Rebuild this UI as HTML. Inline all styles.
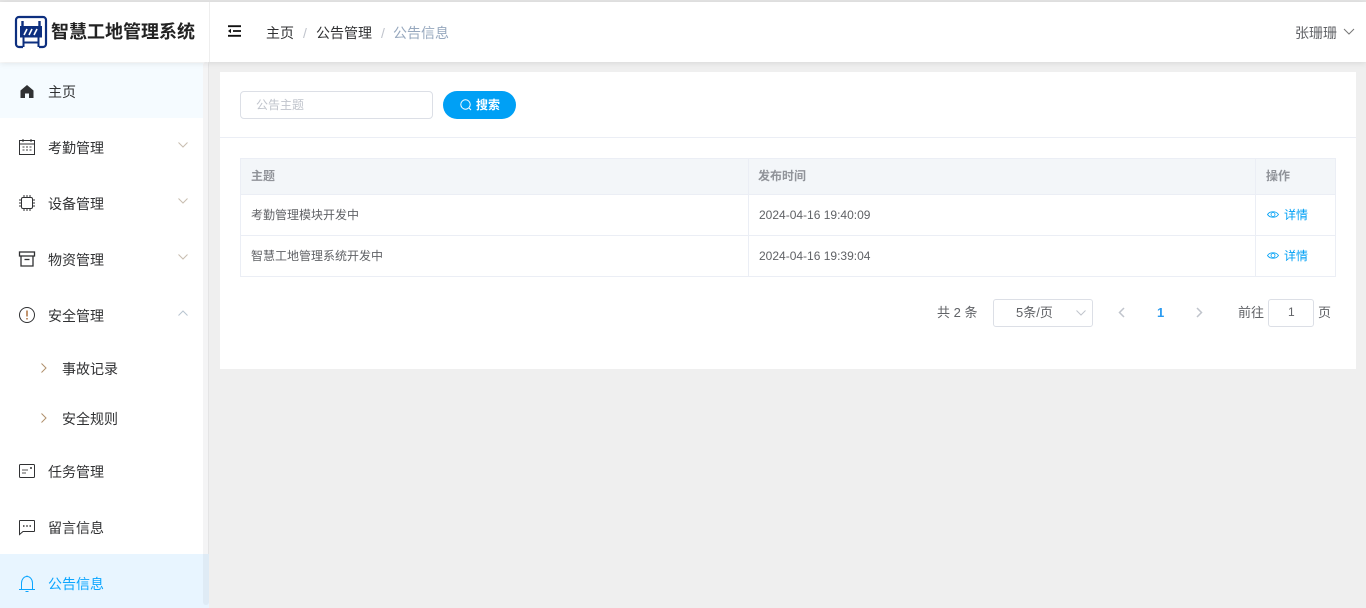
<!DOCTYPE html>
<html lang="zh"><head><meta charset="utf-8"><title>公告信息</title>
<style>
html,body{margin:0;padding:0;width:1366px;height:608px;overflow:hidden;background:#efefef;font-family:"Liberation Sans","WenQuanYi Zen Hei","Noto Sans CJK SC",sans-serif;}
*{box-sizing:border-box}
.a{position:absolute}
.t{position:absolute;white-space:nowrap;line-height:20px;height:20px}
svg{position:absolute;overflow:visible}
.m{font-size:14px;color:#303133;left:48px}
.th{font-size:12px;font-weight:bold;color:#909399}
.td{font-size:12px;color:#606266}
.lnk{font-size:12px;color:#00a0f5}
</style></head><body>
<div class="a" style="left:0;top:0;width:1366px;height:2px;background:#e6e6e6"></div>
<div class="a" style="left:0;top:2px;width:1366px;height:60px;background:#fff;box-shadow:0 1px 6px rgba(0,0,0,.1);z-index:3"></div>
<div class="a" style="left:209px;top:2px;width:1px;height:60px;background:#eee;z-index:4"></div>

<div style="position:absolute;left:0;top:0;z-index:5;width:1366px;height:62px">
<svg style="left:15px;top:16px" width="32" height="32" viewBox="0 0 32 32">
<path d="M8 31H4a3 3 0 0 1-3-3V4a3 3 0 0 1 3-3h24a3 3 0 0 1 3 3v24a3 3 0 0 1-3 3h-4" fill="none" stroke="#0d2f7f" stroke-width="2.200"/>
<rect x="5" y="10" width="22" height="11.500" fill="#0d2f7f"/>
<path d="M9 19l3-6M14 19l3-6M19 19l3-6" stroke="#fff" stroke-width="1.600"/>
<path d="M7.500 5v5M24.500 5v5" stroke="#0d2f7f" stroke-width="2.400"/>
<path d="M8.500 21.500V31M23.500 21.500V31M8.500 26.500h15" stroke="#0d2f7f" stroke-width="2"/>
</svg>
<div class="t" style="left:51px;top:21px;height:22px;line-height:22px;font-size:18px;font-weight:bold;color:#222">智慧工地管理系统</div>
<svg style="left:228px;top:25px" width="13" height="12" viewBox="0 0 13 12"><path d="M0 1.200h13M5 6h8M0 10.800h13" stroke="#111" stroke-width="1.800" fill="none"/><path d="M0 6l3-2.200v4.400z" fill="#111"/></svg>
<div class="t" style="left:266px;top:23px;font-size:14px;color:#303133">主页</div>
<div class="t" style="left:303px;top:23px;font-size:14px;color:#c0c4cc">/</div>
<div class="t" style="left:316px;top:23px;font-size:14px;color:#303133">公告管理</div>
<div class="t" style="left:381px;top:23px;font-size:14px;color:#c0c4cc">/</div>
<div class="t" style="left:393px;top:23px;font-size:14px;color:#97a8be">公告信息</div>
<div class="t" style="left:1295px;top:23px;font-size:14px;color:#606266">张珊珊</div>
<svg style="left:1343px;top:28px" width="12" height="8" viewBox="0 0 12 8"><path d="M1 1l5 5 5-5" fill="none" stroke="#777" stroke-width="1"/></svg>
</div>

<!-- sidebar -->
<div class="a" style="left:0;top:62px;width:209px;height:546px;background:#fff;border-right:1px solid #eee"></div>
<div class="a" style="left:0;top:63px;width:203px;height:55px;background:#f5fbff"></div>
<div class="a" style="left:0;top:554px;width:209px;height:54px;background:#e8f5ff"></div>
<div class="a" style="left:203px;top:62px;width:6px;height:543px;background:rgba(144,147,153,.1);border-radius:3px"></div>

<svg style="left:20px;top:85px" width="14" height="13" viewBox="0 0 14 13"><path d="M7 0L.5 5.500V13h4.500V8.500h4V13h4.500V5.500z" fill="#303133"/></svg>
<div class="t m" style="top:82px">主页</div>

<svg style="left:19px;top:139px" width="16" height="16" viewBox="0 0 16 16" fill="none" stroke="#303133"><rect x=".5" y="1.500" width="15" height="14"/><path d="M.5 5h15M4 0v3M12 0v3"/><path d="M3.500 8h2M7 8h2M10.500 8h2M3.500 11h2M7 11h2M10.500 11h2" stroke-width="1.200" stroke="#666"/></svg>
<div class="t m" style="top:138px">考勤管理</div>
<svg style="left:178px;top:142px" width="10" height="6" viewBox="0 0 10 6"><path d="M.5.500l4.500 4.500 4.500-4.500" fill="none" stroke="#c8bdb0"/></svg>

<svg style="left:19px;top:195px" width="16" height="16" viewBox="0 0 16 16" fill="none" stroke="#303133"><rect x="2.500" y="2.500" width="11" height="11" rx="1.500"/><path d="M5 0v2M8 0v2M11 0v2M5 14v2M8 14v2M11 14v2M0 5h2M0 8h2M0 11h2M14 5h2M14 8h2M14 11h2"/></svg>
<div class="t m" style="top:194px">设备管理</div>
<svg style="left:178px;top:198px" width="10" height="6" viewBox="0 0 10 6"><path d="M.5.500l4.500 4.500 4.500-4.500" fill="none" stroke="#c8bdb0"/></svg>

<svg style="left:19px;top:251px" width="16" height="16" viewBox="0 0 16 16" fill="none" stroke="#303133"><rect x=".5" y="1" width="15" height="4" stroke-width="1.300"/><path d="M2 5v10h12V5" stroke-width="1.300"/><path d="M5.500 8.500h5" stroke-width="1.300"/></svg>
<div class="t m" style="top:250px">物资管理</div>
<svg style="left:178px;top:254px" width="10" height="6" viewBox="0 0 10 6"><path d="M.5.500l4.500 4.500 4.500-4.500" fill="none" stroke="#c8bdb0"/></svg>

<svg style="left:19px;top:307px" width="16" height="16" viewBox="0 0 16 16" fill="none"><circle cx="8" cy="8" r="7.500" stroke="#303133"/><path d="M8 3.500v6" stroke="#a05a20" stroke-width="1.300"/><path d="M8 11v1.500" stroke="#a05a20" stroke-width="1.300"/></svg>
<div class="t m" style="top:306px">安全管理</div>
<svg style="left:178px;top:310px" width="10" height="6" viewBox="0 0 10 6"><path d="M.5 5.500L5 1l4.500 4.500" fill="none" stroke="#b8c4d0"/></svg>

<svg style="left:41px;top:363px" width="6" height="10" viewBox="0 0 6 10"><path d="M.5.500L5 5 .5 9.500" fill="none" stroke="#b0906c"/></svg>
<div class="t m" style="left:62px;top:359px">事故记录</div>
<svg style="left:41px;top:413px" width="6" height="10" viewBox="0 0 6 10"><path d="M.5.500L5 5 .5 9.500" fill="none" stroke="#b0906c"/></svg>
<div class="t m" style="left:62px;top:409px">安全规则</div>

<svg style="left:19px;top:464px" width="16" height="14" viewBox="0 0 16 14" fill="none"><rect x=".5" y=".5" width="15" height="13" rx="1" stroke="#303133"/><path d="M3 6h6M3 9h4" stroke="#555"/><path d="M11 4h2" stroke="#333" stroke-width="1.500"/></svg>
<div class="t m" style="top:462px">任务管理</div>

<svg style="left:19px;top:520px" width="16" height="15" viewBox="0 0 16 15" fill="none"><path d="M1 .5h14a.5.500 0 0 1 .5.500v10a.5.500 0 0 1-.5.500H4L.5 14.500V1A.5.500 0 0 1 1 .5z" stroke="#303133"/><path d="M4 6h1.500M7.250 6h1.500M10.500 6H12" stroke="#333" stroke-width="1.500"/></svg>
<div class="t m" style="top:518px">留言信息</div>

<svg style="left:19px;top:575px" width="16" height="17" viewBox="0 0 16 17" fill="none" stroke="#0aa5ff"><path d="M0 14.500h16M2.500 14.500V8a5.500 6.500 0 0 1 11 0v6.500"/><path d="M8 .5v1M6.500 16.500h3"/></svg>
<div class="t m" style="top:574px;color:#0aa5ff">公告信息</div>

<!-- card -->
<div class="a" style="left:220px;top:72px;width:1136px;height:297px;background:#fff"></div>
<div class="a" style="left:220px;top:137px;width:1136px;height:1px;background:#ebeef5"></div>
<div class="a" style="left:240px;top:91px;width:193px;height:28px;border:1px solid #dcdfe6;border-radius:4px;background:#fff"></div>
<div class="t" style="left:256px;top:95px;font-size:12px;color:#c0c4cc">公告主题</div>
<div class="a" style="left:443px;top:91px;width:73px;height:28px;background:#00a0f5;border-radius:14px"></div>
<svg style="left:460px;top:99px" width="12" height="12" viewBox="0 0 12 12" fill="none" stroke="#fff"><circle cx="5.500" cy="5.500" r="4.700"/><path d="M9 9l2 2"/></svg>
<div class="t" style="left:476px;top:95px;font-size:12px;color:#fff;font-weight:bold">搜索</div>

<!-- table -->
<div class="a" style="left:240px;top:158px;width:1096px;height:37px;background:#f3f6f9"></div>
<div class="a" style="left:240px;top:158px;width:1096px;height:119px;border:1px solid #ebeef5"></div>
<div class="a" style="left:240px;top:194px;width:1096px;height:1px;background:#ebeef5"></div>
<div class="a" style="left:240px;top:235px;width:1096px;height:1px;background:#ebeef5"></div>
<div class="a" style="left:748px;top:158px;width:1px;height:119px;background:#ebeef5"></div>
<div class="a" style="left:1255px;top:158px;width:1px;height:119px;background:#ebeef5"></div>

<div class="t th" style="left:251px;top:166px">主题</div>
<div class="t th" style="left:758px;top:166px">发布时间</div>
<div class="t th" style="left:1266px;top:166px">操作</div>
<div class="t td" style="left:251px;top:205px">考勤管理模块开发中</div>
<div class="t td" style="left:759px;top:205px">2024-04-16 19:40:09</div>
<div class="t td" style="left:251px;top:246px">智慧工地管理系统开发中</div>
<div class="t td" style="left:759px;top:246px">2024-04-16 19:39:04</div>
<svg style="left:1267px;top:210px" width="12" height="9" viewBox="0 0 12 9" fill="none" stroke="#00a0f5" stroke-width=".8"><path d="M.5 4.500C3 .8 9 .8 11.500 4.500 9 8.200 3 8.200.5 4.500z"/><circle cx="6" cy="4.500" r="2"/></svg>
<div class="t lnk" style="left:1284px;top:205px">详情</div>
<svg style="left:1267px;top:251px" width="12" height="9" viewBox="0 0 12 9" fill="none" stroke="#00a0f5" stroke-width=".8"><path d="M.5 4.500C3 .8 9 .8 11.500 4.500 9 8.200 3 8.200.5 4.500z"/><circle cx="6" cy="4.500" r="2"/></svg>
<div class="t lnk" style="left:1284px;top:246px">详情</div>

<!-- pagination -->
<div class="t" style="left:937px;top:303px;font-size:13px;color:#606266">共 2 条</div>
<div class="a" style="left:993px;top:299px;width:100px;height:28px;border:1px solid #dcdfe6;border-radius:3px;background:#fff"></div>
<div class="t" style="left:1016px;top:303px;font-size:13px;color:#606266">5条/页</div>
<svg style="left:1076px;top:310px" width="10" height="6" viewBox="0 0 10 6"><path d="M.5.500l4.500 4.500 4.500-4.500" fill="none" stroke="#c0c4cc"/></svg>
<svg style="left:1118px;top:307px" width="7" height="11" viewBox="0 0 7 11"><path d="M6 1L1.500 5.500 6 10" fill="none" stroke="#c0c4cc" stroke-width="1.500"/></svg>
<div class="t" style="left:1157px;top:303px;font-size:13px;font-weight:bold;color:#2b9bf0">1</div>
<svg style="left:1196px;top:307px" width="7" height="11" viewBox="0 0 7 11"><path d="M1 1l4.500 4.500L1 10" fill="none" stroke="#c0c4cc" stroke-width="1.500"/></svg>
<div class="t" style="left:1238px;top:303px;font-size:13px;color:#606266">前往</div>
<div class="a" style="left:1268px;top:299px;width:46px;height:28px;border:1px solid #dcdfe6;border-radius:3px;background:#fff"></div>
<div class="t" style="left:1288px;top:302px;font-size:12px;color:#606266">1</div>
<div class="t" style="left:1318px;top:303px;font-size:13px;color:#606266">页</div>
</body></html>
